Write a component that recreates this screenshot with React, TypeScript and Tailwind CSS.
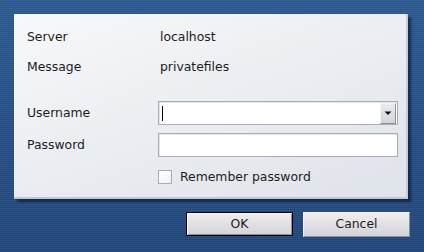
import { useState } from "react";

const font = { fontFamily: '"DejaVu Sans", Verdana, sans-serif' };

const Field = ({ children }: { children?: React.ReactNode }) => (
  <div className="flex h-[24px] w-[240px] items-center border border-[#a7acb5] bg-white shadow-[inset_1px_1px_0_#e4e6ea]">
    {children}
  </div>
);

export default function App() {
  const [remember, setRemember] = useState(false);

  return (
    <div
      className="flex h-[252px] w-[424px] flex-col overflow-hidden bg-[image:repeating-linear-gradient(to_bottom,rgba(255,255,255,0.03)_0px,rgba(255,255,255,0.03)_1px,rgba(0,0,0,0.07)_1px,rgba(0,0,0,0.07)_2px),linear-gradient(to_bottom,#2e5d95,#24497f)] text-[12.4px] text-[#1c1c1c]"
      style={font}
    >
      {/* dialog body */}
      <div className="ml-[14px] mt-[14px] flex h-[185px] w-[394px] flex-col border-b-2 border-r-2 border-b-[#c3c6cc] border-r-[#c9ccd1] bg-[linear-gradient(160deg,#f7f8fa,#e9ecf0_55%,#dfe3ea)] pl-[13px] pt-[11px] shadow-[3px_3px_2px_rgba(5,20,50,0.6)]">
        <div className="flex h-[24px] items-center">
          <span className="w-[131px]">Server</span>
          <span className="pl-[2px]">localhost</span>
        </div>
        <div className="mt-[6px] flex h-[24px] items-center">
          <span className="w-[131px]">Message</span>
          <span className="pl-[2px]">privatefiles</span>
        </div>

        <div className="mt-[22px] flex h-[24px] items-center">
          <span className="w-[131px]">Username</span>
          <Field>
            <span className="ml-[3px] h-[15px] w-px bg-black" />
            <div className="ml-auto mr-[1px] flex h-[21px] w-[16px] items-center justify-center border border-b-[#8e9198] border-l-[#f4f4f6] border-r-[#8e9198] border-t-[#f4f4f6] bg-[linear-gradient(to_bottom,#ebebee,#d3d4d8)]">
              <svg width="8" height="6" viewBox="0 0 8 6">
                <path d="M0.5 1.5h7L4 5z" fill="#111" />
              </svg>
            </div>
          </Field>
        </div>

        <div className="mt-[8px] flex h-[24px] items-center">
          <span className="w-[131px]">Password</span>
          <Field />
        </div>

        <label className="ml-[131px] mt-[13px] flex h-[14px] cursor-pointer items-center gap-[8px]">
          <input
            type="checkbox"
            checked={remember}
            onChange={(e) => setRemember(e.target.checked)}
            className="h-[14px] w-[14px] appearance-none border border-[#a7acb5] bg-[linear-gradient(135deg,#ffffff,#eef0f3)] checked:bg-[#6d8fc0]"
          />
          <span>Remember password</span>
        </label>
      </div>

      {/* buttons */}
      <div className="mr-[14px] mt-[13px] flex justify-end gap-[10px]">
        <button className="h-[24px] w-[107px] border border-black bg-[linear-gradient(to_bottom,#eeeef0,#d3d4d8)] shadow-[inset_1px_1px_0_#fafafa,inset_-1px_-1px_0_#8e9198] text-[#1c1c1c]">
          OK
        </button>
        <button className="h-[25px] w-[107px] border border-b-[#8e9198] border-l-[#f6f6f8] border-r-[#8e9198] border-t-[#f6f6f8] bg-[linear-gradient(to_bottom,#eeeef0,#d3d4d8)] text-[#1c1c1c]">
          Cancel
        </button>
      </div>
    </div>
  );
}
